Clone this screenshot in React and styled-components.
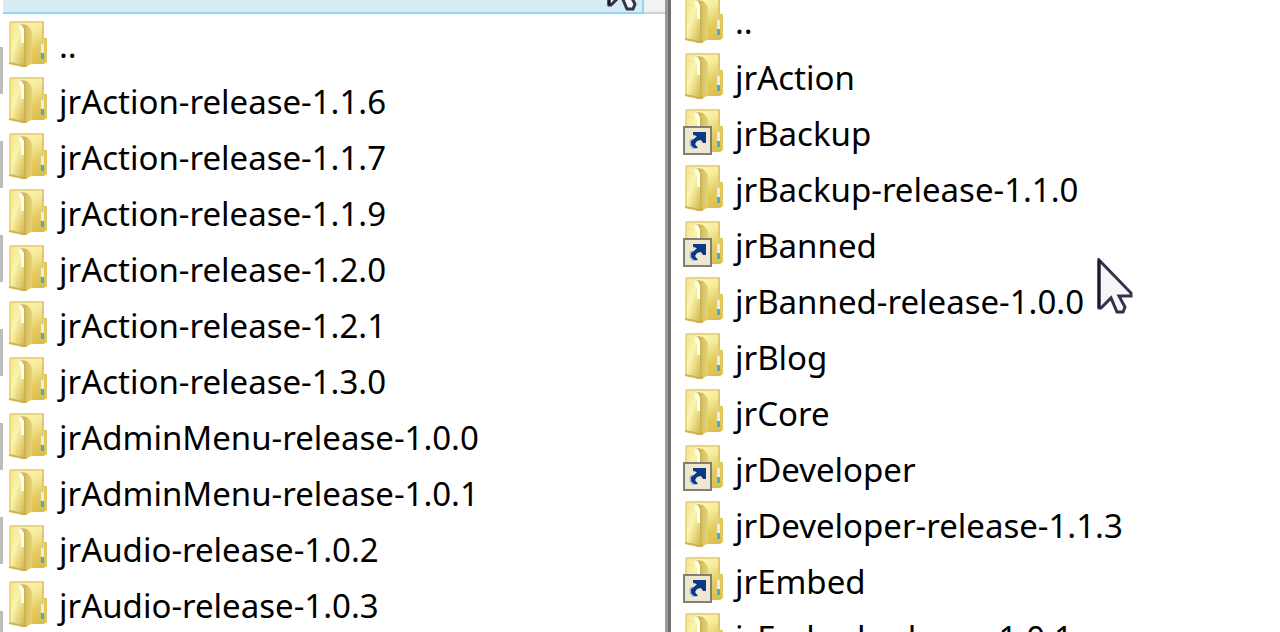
import styled, { createGlobalStyle } from "styled-components";

const GlobalStyle = createGlobalStyle`
  body {
    margin: 0;
    background: #fff;
    font-family: "Noto Sans", "Open Sans", sans-serif;
    color: #000;
  }
`;

const Page = styled.main`
  position: relative;
  display: flex;
  height: 100vh;
  overflow: hidden;
`;

/* dashed focus edge at the far left of the window */
const Edge = styled.div`
  flex: none;
  width: 3px;
  background: repeating-linear-gradient(#fff 0 47px, #bdbdbd 47px 94px);
`;

const Pane = styled.section`
  flex: ${({ grow }) => grow} 1 0;
  min-width: 0;
  overflow: hidden;
`;

const HeadRow = styled.div`
  display: flex;
  height: 14px;
  box-sizing: border-box;
`;

const HeadCell = styled.div`
  flex: 1;
  background: #d9ebf5;
  border-right: 2px solid #8fd8fc;
  border-bottom: 2px solid #8fd8fc;
`;

const HeadRest = styled.div`
  width: 21px;
  background: #f2f2f2;
  border-bottom: 2px solid #d2d2d2;
`;

const Divider = styled.div`
  flex: none;
  width: 6px;
  background: linear-gradient(to right, #999 50%, #707070 50%);
`;

const List = styled.ul`
  list-style: none;
  margin: ${({ top }) => top}px 0 0;
  padding: 0 0 0 ${({ left }) => left}px;
`;

const Row = styled.li`
  display: flex;
  align-items: flex-start;
  gap: 10px;
  height: 56px;
`;

const IconSvg = styled.svg`
  flex: none;
  width: 42px;
  height: 48px;
  margin-top: 4px;
`;

const Name = styled.span`
  padding-top: 2px;
  font-size: 33px;
  line-height: 56px;
  white-space: nowrap;
`;

const Pointer = styled.svg`
  position: absolute;
  left: ${({ x }) => x}px;
  top: ${({ y }) => y}px;
  width: 36px;
  height: 58px;
`;

const Defs = styled.svg`
  position: absolute;
`;

const leftFiles = [
  "..",
  "jrAction-release-1.1.6",
  "jrAction-release-1.1.7",
  "jrAction-release-1.1.9",
  "jrAction-release-1.2.0",
  "jrAction-release-1.2.1",
  "jrAction-release-1.3.0",
  "jrAdminMenu-release-1.0.0",
  "jrAdminMenu-release-1.0.1",
  "jrAudio-release-1.0.2",
  "jrAudio-release-1.0.3",
];

const rightFiles = [
  "..",
  "jrAction",
  "jrBackup",
  "jrBackup-release-1.1.0",
  "jrBanned",
  "jrBanned-release-1.0.0",
  "jrBlog",
  "jrCore",
  "jrDeveloper",
  "jrDeveloper-release-1.1.3",
  "jrEmbed",
  "jrEmbed-release-1.0.1",
];

const links = ["jrBackup", "jrBanned", "jrDeveloper", "jrEmbed"];

function FolderDefs() {
  return (
    <Defs width="0" height="0" aria-hidden="true">
      <defs>
        <linearGradient id="back" x1="0.3" y1="0" x2="0.8" y2="1">
          <stop offset="0" stopColor="#fdf6b4" />
          <stop offset="0.3" stopColor="#f7eda0" />
          <stop offset="0.65" stopColor="#e3cb60" />
          <stop offset="1" stopColor="#dcbc45" />
        </linearGradient>
        <linearGradient id="front" x1="0" y1="0" x2="1" y2="1">
          <stop offset="0" stopColor="#f2e27e" />
          <stop offset="0.45" stopColor="#faf3ae" />
          <stop offset="1" stopColor="#d3b64b" />
        </linearGradient>
        <linearGradient id="fold" x1="0" y1="0" x2="1" y2="0">
          <stop offset="0" stopColor="#c3aa4c" />
          <stop offset="0.4" stopColor="#cfb656" />
          <stop offset="0.5" stopColor="#d9c266" />
          <stop offset="1" stopColor="#e6d274" />
        </linearGradient>
      </defs>
    </Defs>
  );
}

function FolderIcon({ link }) {
  return (
    <IconSvg viewBox="0 0 42 48" aria-hidden="true">
      <path d="M3 1H37V18H40V42L37 44H24L18 47H15L11 45L2 43V2Z" fill="url(#back)" />
      <path d="M3 2H37" stroke="#e6d686" strokeWidth="2" />
      <path d="M36 2V19" stroke="#dfc871" strokeWidth="2" />
      <path d="M37 19H39V42" fill="none" stroke="#e0c75e" strokeWidth="2" />
      <path d="M14 4L20 5L24 9L25 12V43L20 45L18 47H15Z" fill="url(#fold)" />
      <path d="M2 3H12L15 5L17 10V41L16 47L11 45L2 43Z" fill="url(#front)" />
      <path d="M3 2V43" stroke="#ecd978" strokeWidth="2" />
      <path d="M2 43L12 45L15 46H20" fill="none" stroke="#cdb14b" strokeWidth="2" />
      <path d="M11 6H15L17 9V23H14V11Z" fill="#fffef4" />
      <path d="M34 24H37V33H34Z" fill="#e9edf0" />
      <path d="M34 33H37V39H34Z" fill="#4aabd0" />
      {link && (
        <g>
          <rect x="1" y="19" width="27" height="27" fill="#efe8d0" stroke="#807e78" strokeWidth="2" />
          <path d="M7 31H10V38H14V41H9L6 37Z" fill="#b4bfcc" />
          <path
            d="M10 24H23V35H20L18 32L14 33L12 36L15 40H11L8 37V33L12 30L14 28L10 27Z"
            fill="#083a86"
          />
        </g>
      )}
    </IconSvg>
  );
}

function FileList({ files, top, left }) {
  return (
    <List top={top} left={left}>
      {files.map((file) => (
        <Row key={file}>
          <FolderIcon link={links.includes(file)} />
          <Name>{file}</Name>
        </Row>
      ))}
    </List>
  );
}

function Cursor({ x, y }) {
  return (
    <Pointer x={x} y={y} viewBox="0 0 36 58" aria-hidden="true">
      <path
        d="M2 2V50H4L14 40L20 54H26L28 49L22 38H34V35Z"
        fill="#f6f6f8"
        stroke="#33344a"
        strokeWidth="3"
      />
      <path d="M2 2V50" stroke="#1b1b30" strokeWidth="3" />
    </Pointer>
  );
}

export default function App() {
  return (
    <>
      <GlobalStyle />
      <FolderDefs />
      <Page>
        <Edge />
        <Pane grow={662}>
          <HeadRow>
            <HeadCell />
            <HeadRest />
          </HeadRow>
          <FileList files={leftFiles} top={2} left={4} />
        </Pane>
        <Divider />
        <Pane grow={609}>
          <FileList files={rightFiles} top={-8} left={12} />
        </Pane>
        <Cursor x={607} y={-45} />
        <Cursor x={1097} y={258} />
      </Page>
    </>
  );
}
